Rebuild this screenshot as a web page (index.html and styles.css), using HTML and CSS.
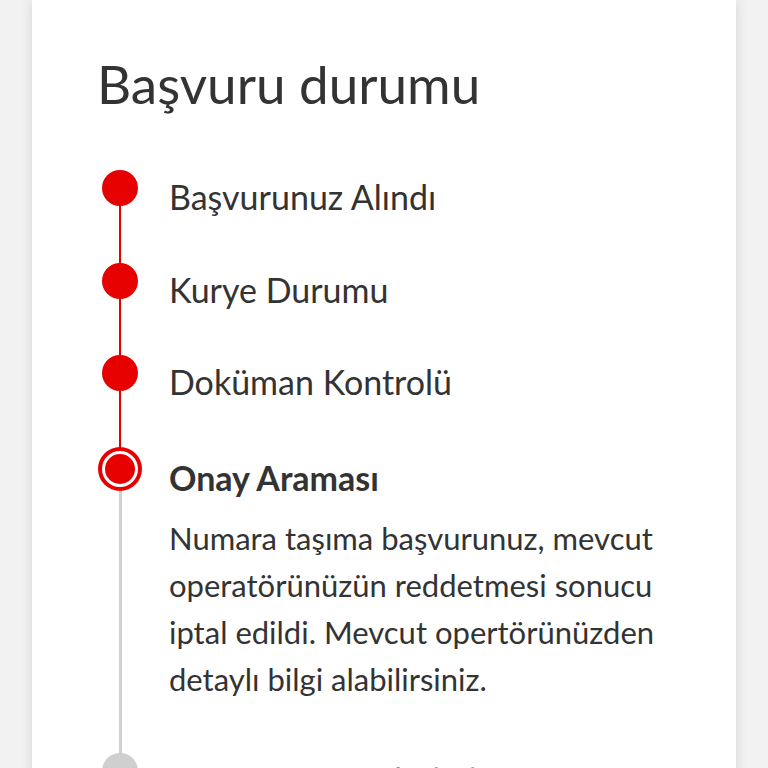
FILE: index.html
```html
<!DOCTYPE html>
<html lang="tr">
<head>
  <meta charset="UTF-8">
  <title>Başvuru durumu</title>
  <link rel="stylesheet" href="styles.css">
</head>
<body>

  <div class="card">
    <h1>Başvuru durumu</h1>

    <ol class="timeline">
      <li class="step done">
        <span class="dot"></span>
        <div class="step-body">
          <div class="step-title">Başvurunuz Alındı</div>
        </div>
      </li>
      <li class="step done">
        <span class="dot"></span>
        <div class="step-body">
          <div class="step-title">Kurye Durumu</div>
        </div>
      </li>
      <li class="step done">
        <span class="dot"></span>
        <div class="step-body">
          <div class="step-title">Doküman Kontrolü</div>
        </div>
      </li>
      <li class="step current">
        <span class="dot"></span>
        <div class="step-body">
          <div class="step-title">Onay Araması</div>
          <p class="step-text">Numara taşıma başvurunuz, mevcut operatörünüzün reddetmesi sonucu iptal edildi. Mevcut opertörünüzden detaylı bilgi alabilirsiniz.</p>
        </div>
      </li>
      <li class="step pending">
        <span class="dot"></span>
        <div class="step-body">
          <div class="step-title">Kartınızın Gönderimi</div>
        </div>
      </li>
    </ol>
  </div>

</body>
</html>
```

FILE: styles.css
```css
body {
  margin: 0;
  background: #f2f2f2;
  font-family: Lato, "Open Sans", sans-serif;
  color: #333;
  overflow: hidden;
}

.card {
  margin: 0 32px;
  padding: 52px 56px 40px 65px;
  background: #fff;
  box-shadow: 0 0 12px rgba(0, 0, 0, 0.12);
  min-height: 900px;
}

h1 {
  margin: 0 0 54px;
  font-size: 53px;
  font-weight: 400;
  line-height: 64px;
  color: #333;
}

.timeline {
  list-style: none;
  margin: 0;
  padding: 0;
}

.step {
  position: relative;
  display: grid;
  grid-template-columns: 46px 1fr;
  column-gap: 26px;
  align-items: start;
  padding-bottom: 42.5px;
}

/* connector running down to the next dot */
.step::before {
  content: "";
  position: absolute;
  left: 22px;
  top: 18px;
  bottom: -20px;
  width: 2px;
  background: #e60000;
}

.step.current {
  padding-top: 3px;
  padding-bottom: 50.5px;
}

.step.current::before {
  background: #d0d0d0;
  width: 3px;
  left: 21.5px;
}

.step.pending::before {
  display: none;
}

.dot {
  position: relative;
  z-index: 1;
  justify-self: center;
  width: 36px;
  height: 36px;
  border-radius: 50%;
  background: #e60000;
}

.step.current .dot {
  width: 30px;
  height: 30px;
  border: 3px solid #fff;
  box-shadow: 0 0 0 4px #e60000;
}

.step.pending .dot {
  background: #cfcfcf;
}

.step-body {
  padding-top: 4px;
}

.step-title {
  font-size: 34px;
  line-height: 46px;
}

.step.current .step-title {
  font-weight: 700;
}

.step.pending .step-title {
  color: #999;
}

.step-text {
  margin: 14px 0 0;
  font-size: 31px;
  line-height: 47px;
}
```
